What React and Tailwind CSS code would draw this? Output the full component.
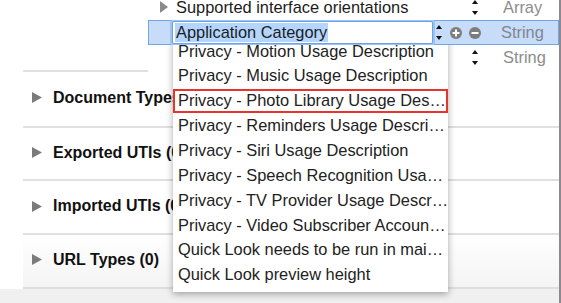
import React from 'react';

const items = [
  'Privacy - Motion Usage Description',
  'Privacy - Music Usage Description',
  'Privacy - Photo Library Usage Des…',
  'Privacy - Reminders Usage Descri…',
  'Privacy - Siri Usage Description',
  'Privacy - Speech Recognition Usa…',
  'Privacy - TV Provider Usage Descr…',
  'Privacy - Video Subscriber Accoun…',
  'Quick Look needs to be run in mai…',
  'Quick Look preview height',
  'Quick Look preview width',
];

const sections = ['Document Types (0)', 'Exported UTIs (0)', 'Imported UTIs (0)', 'URL Types (0)'];

function Disclosure({ w = 10, h = 11, color = '#7b7b7b' }) {
  return (
    <svg width={w} height={h} viewBox={`0 0 ${w} ${h}`} className="shrink-0">
      <polygon points={`0,0 ${w},${h / 2} 0,${h}`} fill={color} />
    </svg>
  );
}

function Stepper() {
  return (
    <svg width="6" height="15" viewBox="0 0 6 15" className="shrink-0">
      <polygon points="3,0 6,4 0,4" fill="#111" />
      <polygon points="0,11 6,11 3,15" fill="#111" />
    </svg>
  );
}

function RoundBtn({ plus }) {
  return (
    <svg width="12" height="12" viewBox="0 0 12 12" className="shrink-0">
      <circle cx="6" cy="6" r="6" fill="#7d7d7d" />
      <rect x="2.5" y="5" width="7" height="2" fill="#fff" />
      {plus && <rect x="5" y="2.5" width="2" height="7" fill="#fff" />}
    </svg>
  );
}

export default function App() {
  return (
    <div className="relative w-[561px] h-[303px] overflow-hidden bg-white border-r-2 border-[#8d898e] font-['Liberation_Sans',Arial,sans-serif] text-[16.4px] text-[#1c1c1c]">
      <div className="flex flex-col -mt-[5px]">
        {/* plist rows */}
        <div className="pl-[148px] flex flex-col">
          <div className="h-[25px] flex items-center">
            <div className="w-[287px] flex items-center pl-[12px] gap-[8px]">
              <Disclosure w={8} h={12} color="#8a8a8a" />
              <span className="whitespace-nowrap">Supported interface orientations</span>
            </div>
            <div className="w-[68px] flex justify-end pr-[25px]">
              <Stepper />
            </div>
            <span className="text-[#8c8c8c]">Array</span>
          </div>

          <div className="relative z-20 h-[25px] flex items-center overflow-hidden bg-[#c6dcf8] shadow-[inset_0_0_0_1px_#6ea6ec]">
            <div className="w-[24px]" />
            <div className="w-[261px] h-[23px] flex items-center bg-white rounded-[2px] ring-2 ring-[#9cc4f3] border border-[#6aa2ea]">
              <span className="ml-[2px] bg-[#b4d5fe] px-[1px] leading-[19px] whitespace-nowrap">Application Category</span>
            </div>
            <div className="w-[68px] flex items-center pl-[3px]">
              <Stepper />
              <div className="ml-[8px]"><RoundBtn plus /></div>
              <div className="ml-[7px]"><RoundBtn /></div>
            </div>
            <span className="text-[#808790]">String</span>
          </div>

          <div className="h-[25px] flex items-center">
            <div className="w-[287px]" />
            <div className="w-[68px] flex justify-end pr-[25px]">
              <Stepper />
            </div>
            <span className="text-[#8c8c8c]">String</span>
          </div>
        </div>

        <div className="ml-[23px] w-[125px] h-[2px] bg-[#e0e0e0]" />

        {sections.map((s, i) => (
          <div
            key={s}
            className={`ml-[23px] flex flex-col ${i === 3 ? 'bg-gradient-to-b from-white to-[#f4f4f4]' : ''}`}
          >
            {i > 0 && <div className="h-[2px] bg-[#e0e0e0]" />}
            <div className={`flex items-center gap-[11px] pl-[9px] pb-[2px] ${i > 0 ? 'h-[51.7px]' : 'h-[53.7px]'}`}>
              <Disclosure />
              <span className="font-bold text-[16px] text-[#111] whitespace-nowrap">{s}</span>
            </div>
          </div>
        ))}
        <div className="ml-[23px] h-[2px] bg-[#dedede]" />
        <div className="h-[30px] bg-[#f0f0f0]" />
      </div>

      {/* combo box list */}
      <div className="absolute z-10 left-[173px] top-[38.5px] w-[275px] h-[253.5px] overflow-hidden bg-white shadow-[0_2px_7px_rgba(0,0,0,0.35)]">
        {items.map((t, i) => (
          <div key={t} className="relative h-[24.85px] flex items-center pl-[5px] whitespace-nowrap text-[#222]">
            {i === 2 && (
              <div className="absolute left-0 right-0 top-[1px] bottom-0 border-2 border-[#e8342f]" />
            )}
            {t}
          </div>
        ))}
      </div>
    </div>
  );
}
